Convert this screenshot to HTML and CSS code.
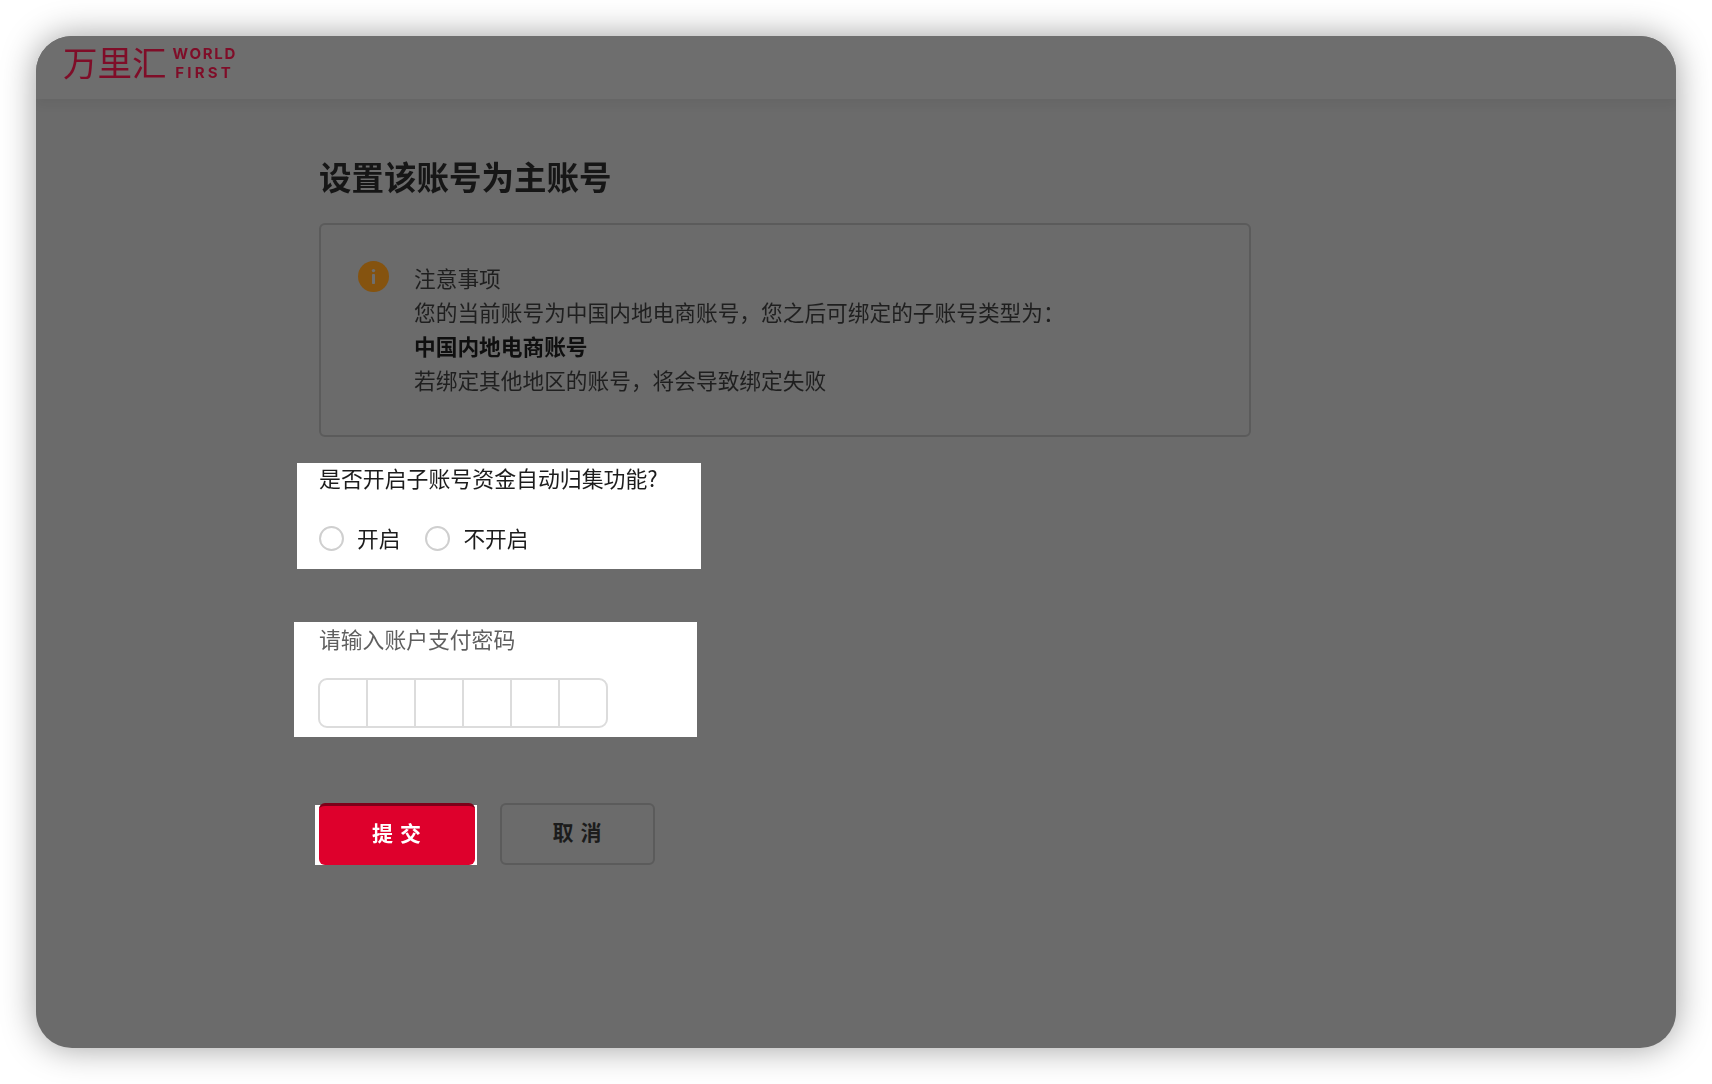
FILE: index.html
```html
<!DOCTYPE html>
<html lang="zh-CN">
<head>
<meta charset="utf-8">
<title>设置该账号为主账号</title>
<link rel="stylesheet" href="styles.css">
</head>
<body>
<div class="window">
  <header class="topbar">
    <div class="logo">
      <span class="logo-cn">万里汇</span>
      <span class="logo-en"><span>WORLD</span><span class="logo-first">FIRST</span></span>
    </div>
  </header>
  <main class="main">
    <h1 class="title">设置该账号为主账号</h1>
    <section class="notice">
      <svg class="notice-icon" viewBox="0 0 31 31" aria-hidden="true">
        <circle cx="15.5" cy="15.5" r="15.5" fill="#85530f"/>
        <circle cx="15.5" cy="9.6" r="1.7" fill="#6e6e6e"/>
        <rect x="14" y="13" width="3" height="10" rx="0.8" fill="#6e6e6e"/>
      </svg>
      <div class="notice-text">
        <p>注意事项</p>
        <p>您的当前账号为中国内地电商账号，您之后可绑定的子账号类型为：</p>
        <p class="strong">中国内地电商账号</p>
        <p>若绑定其他地区的账号，将会导致绑定失败</p>
      </div>
    </section>
    <section class="panel panel-question">
      <div class="question">是否开启子账号资金自动归集功能?</div>
      <div class="radios">
        <label class="radio"><input type="radio" name="collect"><span>开启</span></label>
        <label class="radio"><input type="radio" name="collect"><span>不开启</span></label>
      </div>
    </section>
    <section class="panel panel-password">
      <div class="pw-label">请输入账户支付密码</div>
      <div class="pw-cells">
        <span class="cell"></span><span class="cell"></span><span class="cell"></span><span class="cell"></span><span class="cell"></span><span class="cell"></span>
      </div>
    </section>
    <div class="actions">
      <div class="submit-back"><button class="btn btn-submit" type="button">提 交</button></div>
      <button class="btn btn-cancel" type="button">取 消</button>
    </div>
  </main>
</div>
</body>
</html>
```

FILE: styles.css
```css
* { box-sizing: border-box; }
html, body { margin: 0; height: 100%; background: #fff; }
body {
  padding: 36px;
  overflow: hidden;
  font-family: "Noto Sans CJK SC", "Noto Sans", sans-serif;
  font-size: 21.7px;
}
.window {
  width: 1640px;
  height: 1012px;
  background: #6b6b6b;
  border-radius: 36px;
  box-shadow: 0 0 34px rgba(0, 0, 0, 0.38);
  overflow: hidden;
}
.topbar {
  height: 63px;
  padding: 4px 0 0 27px;
  background: #6e6e6e;
  box-shadow: 0 6px 10px rgba(0, 0, 0, 0.05);
}
.logo {
  display: flex;
  align-items: center;
  gap: 6px;
  color: #7f0d28;
  filter: blur(0.4px);
}
.logo-cn {
  font-size: 34.5px;
  font-weight: 400;
  line-height: 36px;
}
.logo-en {
  display: flex;
  flex-direction: column;
  align-items: center;
  padding-top: 4px;
  font-family: Inter, "Liberation Sans", sans-serif;
  font-size: 15px;
  font-weight: 700;
  line-height: 19px;
  letter-spacing: 1.7px;
}
.logo-first {
  letter-spacing: 3.2px;
}
.main {
  padding: 0 0 0 283px;
}
.title {
  margin: 0;
  padding-top: 54px;
  height: 124px;
  font-size: 32.5px;
  line-height: 46px;
  font-weight: 700;
  color: #161616;
  filter: blur(0.5px);
}
.notice {
  display: flex;
  width: 932px;
  height: 214px;
  padding: 36px 0 0 37px;
  border: 2px solid #5b5b5b;
  border-radius: 6px;
}
.notice-icon {
  width: 31px;
  height: 31px;
  flex: none;
}
.notice-text {
  margin-left: 25px;
  color: #1f1f1f;
  line-height: 34px;
  filter: blur(0.4px);
}
.notice-text p {
  margin: 0;
  white-space: nowrap;
}
.notice-text .strong {
  font-weight: 700;
  color: #0f0f0f;
}
.panel {
  background: #fff;
}
.panel-question {
  width: 404px;
  height: 106px;
  margin: 26px 0 0 -22px;
  padding-left: 22px;
}
.question {
  height: 33px;
  line-height: 29px;
  font-size: 21.9px;
  color: #1c1c1c;
  filter: blur(0.4px);
}
.radios {
  display: flex;
  gap: 25px;
  margin-top: 25px;
}
.radio {
  display: flex;
  align-items: center;
  height: 34px;
  color: #1c1c1c;
}
.radio span {
  margin-left: 13px;
  line-height: 30px;
  filter: blur(0.4px);
}
.radio input {
  appearance: none;
  width: 25px;
  height: 25px;
  margin: 0;
  border: 2px solid #cfcfcf;
  border-radius: 50%;
  background: #fff;
}
.panel-password {
  width: 403px;
  height: 115px;
  margin: 53px 0 0 -25px;
  padding-left: 25px;
}
.pw-label {
  height: 37px;
  line-height: 34px;
  font-size: 21.8px;
  color: #5f5f5f;
  filter: blur(0.4px);
}
.pw-cells {
  display: flex;
  width: 290px;
  height: 50px;
  margin: 19px 0 0 -1px;
  border: 2px solid #dcdcdc;
  border-radius: 9px;
}
.cell {
  flex: 1;
  border-left: 2px solid #dcdcdc;
}
.cell:first-child {
  border-left: 0;
}
.actions {
  display: flex;
  align-items: flex-start;
  margin: 66px 0 0 -4px;
}
.submit-back {
  width: 162px;
  height: 60px;
  margin-top: 2px;
  padding: 0 2px 0 4px;
  background: #fff;
}
.btn {
  font-family: inherit;
  font-size: 21px;
  font-weight: 700;
  line-height: 50px;
  letter-spacing: 1px;
  padding: 0 0 6px;
  border-radius: 6px;
  white-space: pre;
}
.btn-submit {
  display: block;
  width: 156px;
  height: 62px;
  margin-top: -2px;
  padding-bottom: 8px;
  border: 0;
  border-top: 3px solid #7d0019;
  background: #de002c;
  color: #fff;
  filter: blur(0.3px);
}
.btn-cancel {
  width: 155px;
  height: 62px;
  margin-left: 23px;
  border: 2px solid #5b5b5b;
  background: transparent;
  color: #1c1c1c;
}
```
